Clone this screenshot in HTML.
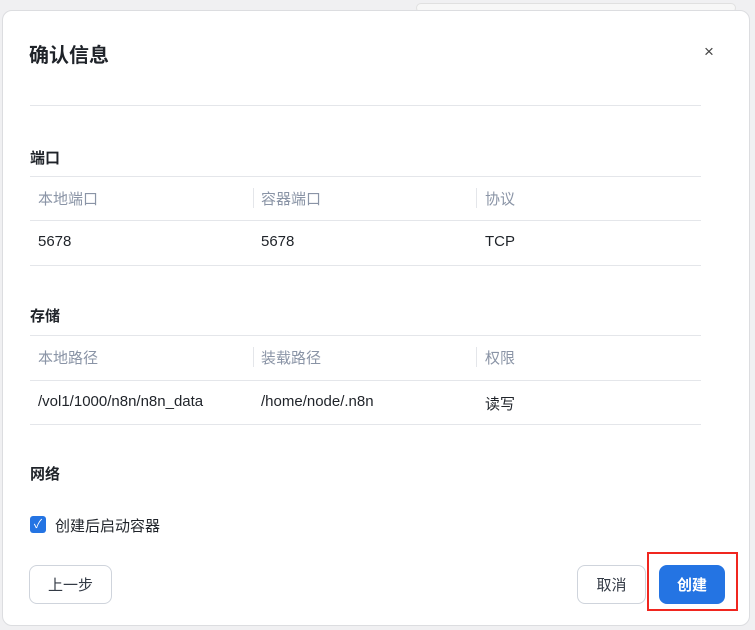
<!DOCTYPE html>
<html><head><meta charset="utf-8"><style>
*{margin:0;padding:0;box-sizing:border-box}
body{width:755px;height:630px;background:#f0f0f2;font-family:"Liberation Sans","Noto Sans CJK SC",sans-serif;position:relative;overflow:hidden}
.m{position:absolute;left:2px;top:10px;width:748px;height:616px;background:#fff;border-radius:10px;border:1px solid #dcdde0}
.a{position:absolute}
.t{left:26px;top:28px;font-size:20px;font-weight:bold;color:#1f2329}
.h{font-size:15px;font-weight:bold;color:#1f2329;left:27px}
.line{position:absolute;left:27px;width:671px;height:1px;background:#e4e6ea}
.c{position:absolute;font-size:15px}
.hd{color:#8a94a6}
.d{color:#1f2329}
.v{position:absolute;width:1px;height:20px;background:#e4e6ea}
.btn{position:absolute;border:1px solid #cfd4dc;border-radius:8px;font-size:15px;color:#333a45;display:flex;align-items:center;justify-content:center;background:#fff}
</style></head><body>
<div class="a" style="left:416px;top:3px;width:320px;height:10px;border:1px solid #e0e0e0;border-radius:6px;background:#f7f7f7"></div>
<div class="m">
<div class="a t">确认信息</div>
<div class="a" style="left:701px;top:31px;font-size:17px;color:#444">×</div>
<div class="line" style="top:94px"></div>
<div class="a h" style="top:136px">端口</div>
<div class="line" style="top:165px"></div>
<div class="c hd" style="left:35px;top:177px">本地端口</div>
<div class="v" style="left:250px;top:177px"></div>
<div class="c hd" style="left:258px;top:177px">容器端口</div>
<div class="v" style="left:473px;top:177px"></div>
<div class="c hd" style="left:482px;top:177px">协议</div>
<div class="line" style="top:209px"></div>
<div class="c d" style="left:35px;top:222px">5678</div>
<div class="c d" style="left:258px;top:222px">5678</div>
<div class="c d" style="left:482px;top:222px">TCP</div>
<div class="line" style="top:254px"></div>
<div class="a h" style="top:294px">存储</div>
<div class="line" style="top:324px"></div>
<div class="c hd" style="left:35px;top:336px">本地路径</div>
<div class="v" style="left:250px;top:336px"></div>
<div class="c hd" style="left:258px;top:336px">装载路径</div>
<div class="v" style="left:473px;top:336px"></div>
<div class="c hd" style="left:482px;top:336px">权限</div>
<div class="line" style="top:369px"></div>
<div class="c d" style="left:35px;top:382px">/vol1/1000/n8n/n8n_data</div>
<div class="c d" style="left:258px;top:382px">/home/node/.n8n</div>
<div class="c d" style="left:482px;top:382px">读写</div>
<div class="line" style="top:413px"></div>
<div class="a h" style="top:452px">网络</div>
<div class="a" style="left:27px;top:505px;width:16px;height:17px;background:#2474e3;border-radius:3px;color:#fff;font-size:12px;text-align:center;line-height:17px">✓</div>
<div class="c d" style="left:52px;top:504px">创建后启动容器</div>
<div class="btn" style="left:26px;top:554px;width:83px;height:39px">上一步</div>
<div class="btn" style="left:574px;top:554px;width:69px;height:39px">取消</div>
<div class="btn" style="left:656px;top:554px;width:66px;height:39px;background:#2474e3;border-color:#2474e3;color:#fff;font-weight:bold">创建</div>
</div>
<div class="a" style="left:647px;top:552px;width:91px;height:59px;border:2px solid #f0261f"></div>
</body></html>
